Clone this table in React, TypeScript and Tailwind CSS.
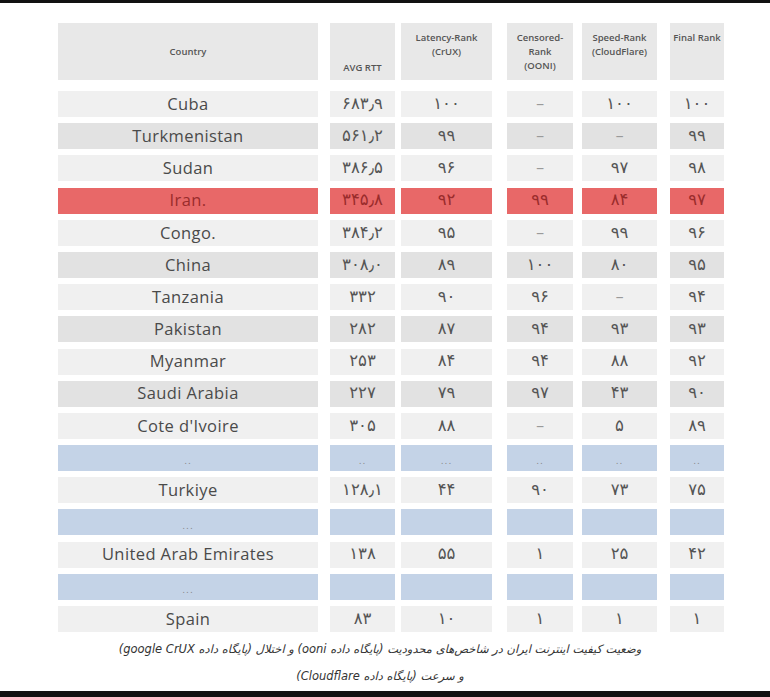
const LIGHT = 'bg-[#f0f0f0]'
const DARK = 'bg-[#e2e2e2]'
const RED = 'bg-[#e86868]'
const BLUE = 'bg-[#c4d3e7]'

type Row = { name: string; vals: string[]; tone: 'light' | 'dark' | 'red' | 'blue' }

const rows: Row[] = [
  { name: 'Cuba', vals: ['۶۸۳٫۹', '۱۰۰', '–', '۱۰۰', '۱۰۰'], tone: 'light' },
  { name: 'Turkmenistan', vals: ['۵۶۱٫۲', '۹۹', '–', '–', '۹۹'], tone: 'dark' },
  { name: 'Sudan', vals: ['۳۸۶٫۵', '۹۶', '–', '۹۷', '۹۸'], tone: 'light' },
  { name: 'Iran.', vals: ['۳۴۵٫۸', '۹۲', '۹۹', '۸۴', '۹۷'], tone: 'red' },
  { name: 'Congo.', vals: ['۳۸۴٫۲', '۹۵', '–', '۹۹', '۹۶'], tone: 'light' },
  { name: 'China', vals: ['۳۰۸٫۰', '۸۹', '۱۰۰', '۸۰', '۹۵'], tone: 'dark' },
  { name: 'Tanzania', vals: ['۳۳۲', '۹۰', '۹۶', '–', '۹۴'], tone: 'light' },
  { name: 'Pakistan', vals: ['۲۸۲', '۸۷', '۹۴', '۹۳', '۹۳'], tone: 'dark' },
  { name: 'Myanmar', vals: ['۲۵۳', '۸۴', '۹۴', '۸۸', '۹۲'], tone: 'light' },
  { name: 'Saudi Arabia', vals: ['۲۲۷', '۷۹', '۹۷', '۴۳', '۹۰'], tone: 'dark' },
  { name: "Cote d'Ivoire", vals: ['۳۰۵', '۸۸', '–', '۵', '۸۹'], tone: 'light' },
  { name: '..', vals: ['..', '...', '..', '..', '..'], tone: 'blue' },
  { name: 'Turkiye', vals: ['۱۲۸٫۱', '۴۴', '۹۰', '۷۳', '۷۵'], tone: 'light' },
  { name: '...', vals: ['', '', '', '', ''], tone: 'blue' },
  { name: 'United Arab Emirates', vals: ['۱۳۸', '۵۵', '۱', '۲۵', '۴۲'], tone: 'light' },
  { name: '...', vals: ['', '', '', '', ''], tone: 'blue' },
  { name: 'Spain', vals: ['۸۳', '۱۰', '۱', '۱', '۱'], tone: 'light' },
]

// widths + left margins of the five value columns
const cols = [
  'w-[65px] ml-[12px]',
  'w-[91px] ml-[6px]',
  'w-[66px] ml-[15px]',
  'w-[75px] ml-[9px]',
  'w-[54px] ml-[13px]',
]

const toneBg = (t: Row['tone']) => (t === 'light' ? LIGHT : t === 'dark' ? DARK : t === 'red' ? RED : BLUE)

function Cell({ text, className, tone }: { text: string; className: string; tone: Row['tone'] }) {
  const isDash = text === '–'
  const isDots = text.startsWith('.')
  return (
    <div className={`${className} ${toneBg(tone)} h-[26px] flex items-center justify-center shrink-0`}>
      {isDots ? (
        <span className="text-[9px] text-[#8a8a8a] pt-[8px] tracking-[1px] font-['DejaVu_Sans',sans-serif]">{text}</span>
      ) : (
        <span
          className={`font-['DejaVu_Sans',sans-serif] text-[16.5px] leading-none ${
            tone === 'red' ? 'text-[#9a2c2c]' : isDash ? 'text-[#9a9a9a]' : 'text-[#555]'
          }`}
        >
          {text}
        </span>
      )}
    </div>
  )
}

export default function App() {
  const head = "font-['Open_Sans',sans-serif] text-[9.5px] font-semibold text-[#555] leading-[14px] text-center"
  return (
    <div className="w-[770px] h-[697px] bg-white flex flex-col overflow-hidden">
      <div className="h-[3px] bg-[#111] shrink-0" />

      <div className="pt-[20px] pl-[58px] shrink-0">
        {/* Header */}
        <div className="flex h-[57px]">
          <div className={`w-[260px] bg-[#e8e8e8] flex items-center justify-center ${head}`}>Country</div>
          <div className={`${cols[0]} bg-[#e8e8e8] flex items-end justify-center pb-[5px] ${head}`}>AVG RTT</div>
          <div className={`${cols[1]} bg-[#e8e8e8] pt-[8px] ${head}`}>
            Latency-Rank
            <br />
            (CrUX)
          </div>
          <div className={`${cols[2]} bg-[#e8e8e8] pt-[8px] ${head}`}>
            Censored-
            <br />
            Rank
            <br />
            (OONI)
          </div>
          <div className={`${cols[3]} bg-[#e8e8e8] pt-[8px] ${head}`}>
            Speed-Rank
            <br />
            (CloudFlare)
          </div>
          <div className={`${cols[4]} bg-[#e8e8e8] pt-[8px] ${head}`}>Final Rank</div>
        </div>

        {/* Body */}
        <div className="flex flex-col gap-[6.2px] mt-[11px]">
          {rows.map((r, i) => (
            <div key={i} className="flex">
              <div className={`w-[260px] h-[26px] ${toneBg(r.tone)} flex items-center justify-center shrink-0`}>
                {r.tone === 'blue' ? (
                  <span className="text-[9px] text-[#8a8a8a] pt-[8px] tracking-[1px] font-['DejaVu_Sans',sans-serif]">{r.name}</span>
                ) : (
                  <span
                    className={`font-['Open_Sans',sans-serif] text-[16.5px] tracking-[0.4px] leading-none ${
                      r.tone === 'red' ? 'text-[#9a2c2c]' : 'text-[#4a4a4a]'
                    }`}
                  >
                    {r.name}
                  </span>
                )}
              </div>
              {r.vals.map((v, j) => (
                <Cell key={j} text={v} className={cols[j]} tone={r.tone} />
              ))}
            </div>
          ))}
        </div>
      </div>

      {/* Caption */}
      <div
        dir="rtl"
        className="shrink-0 mt-[4px] text-center font-['DejaVu_Sans',sans-serif] italic text-[11.5px] leading-[27px] text-[#333] pr-[10px]"
      >
        <div>وضعیت کیفیت اینترنت ایران در شاخص‌های محدودیت (پایگاه داده ooni) و اختلال (پایگاه داده google CrUX)</div>
        <div>و سرعت (پایگاه داده Cloudflare)</div>
      </div>
      <div className="mt-auto h-[6px] bg-[#111] shrink-0" />
    </div>
  )
}
